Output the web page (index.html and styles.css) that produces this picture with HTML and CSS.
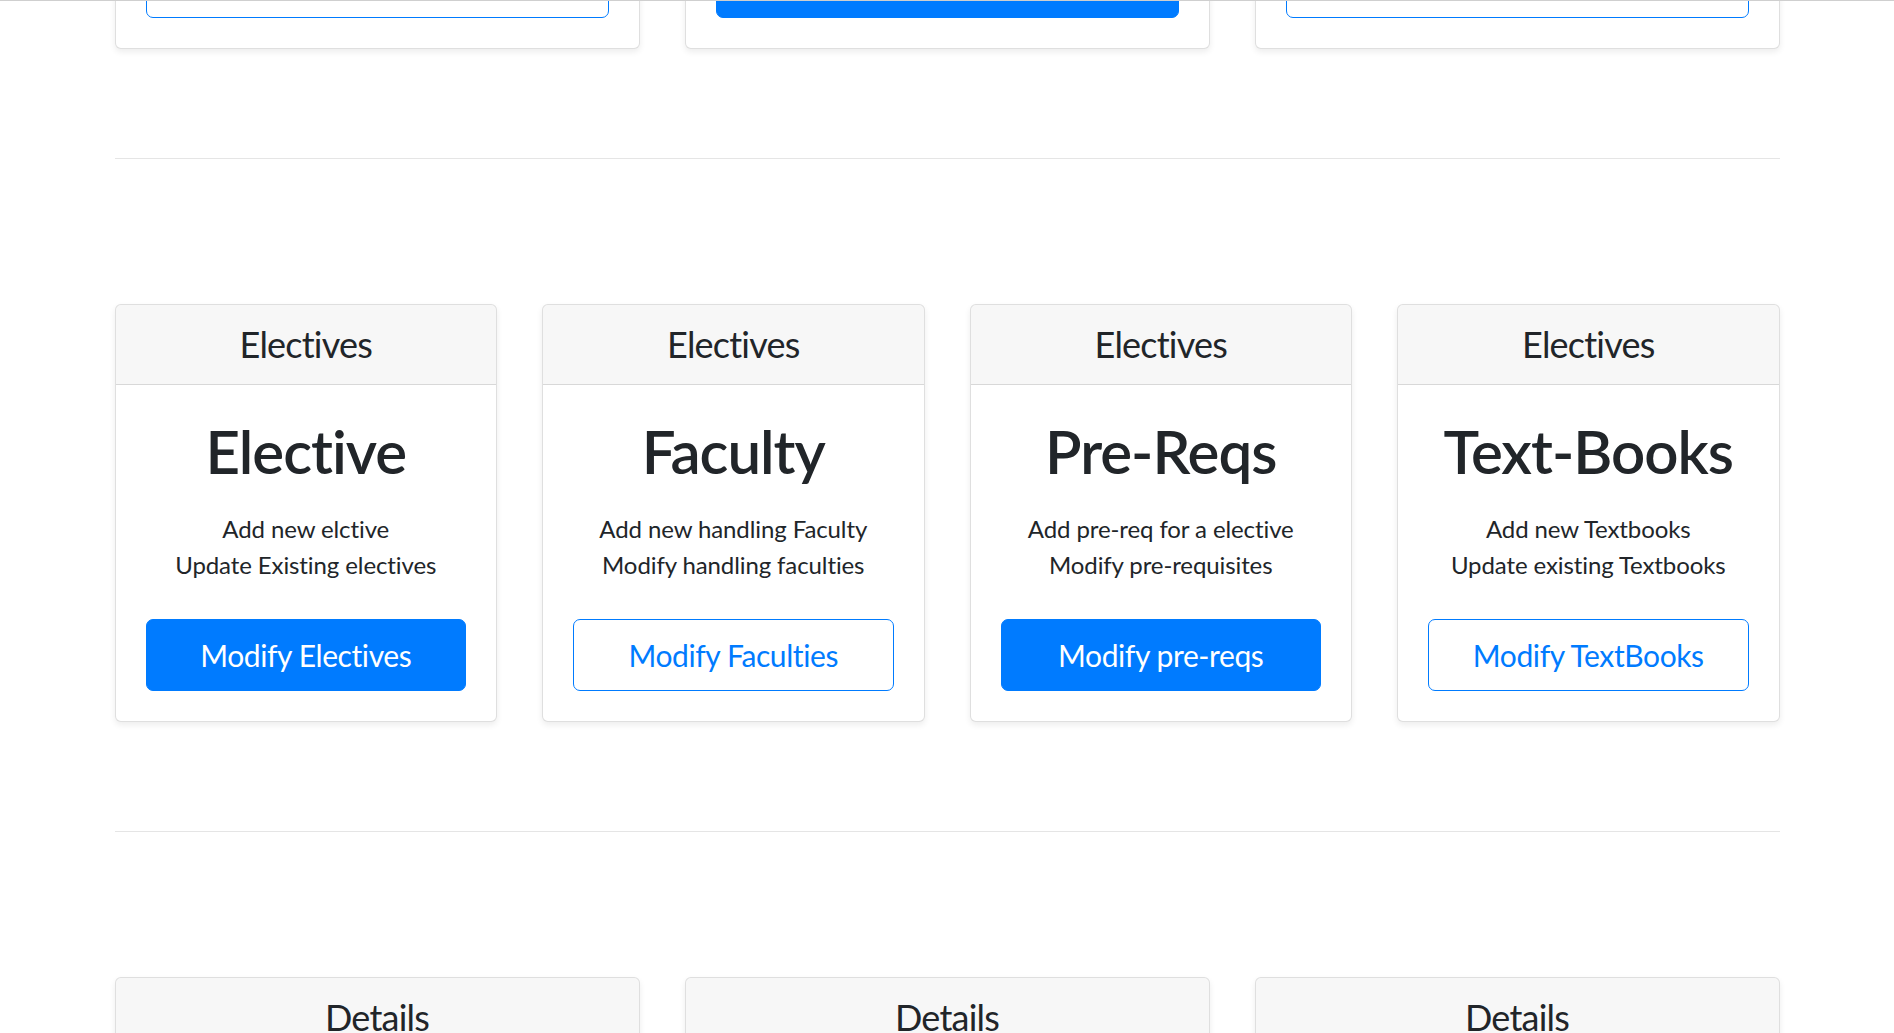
FILE: index.html
```html
<!DOCTYPE html>
<html lang="en">
<head>
<meta charset="utf-8">
<title>Electives Admin</title>
<link rel="stylesheet" href="styles.css">
</head>
<body>
<div class="topline"></div>
<main class="container">
  <section class="deck deck-3 deck-first">
    <div class="card">
      <div class="card-header"><h4 class="card-head-title">Students</h4></div>
      <div class="card-body">
        <h1 class="card-title">Students</h1>
        <ul class="card-list"><li>Add new students</li><li>Update existing students</li></ul>
        <button type="button" class="btn btn-outline">Modify Students</button>
      </div>
    </div>
    <div class="card">
      <div class="card-header"><h4 class="card-head-title">Students</h4></div>
      <div class="card-body">
        <h1 class="card-title">Allotment</h1>
        <ul class="card-list"><li>Allot electives</li><li>View allotments</li></ul>
        <button type="button" class="btn btn-primary">Modify Allotment</button>
      </div>
    </div>
    <div class="card">
      <div class="card-header"><h4 class="card-head-title">Students</h4></div>
      <div class="card-body">
        <h1 class="card-title">Preferences</h1>
        <ul class="card-list"><li>View preferences</li><li>Update preferences</li></ul>
        <button type="button" class="btn btn-outline">Modify Preferences</button>
      </div>
    </div>
  </section>

  <hr class="divider">

  <section class="deck deck-4">
    <div class="card">
      <div class="card-header"><h4 class="card-head-title">Electives</h4></div>
      <div class="card-body">
        <h1 class="card-title">Elective</h1>
        <ul class="card-list"><li>Add new elctive</li><li>Update Existing electives</li></ul>
        <button type="button" class="btn btn-primary">Modify Electives</button>
      </div>
    </div>
    <div class="card">
      <div class="card-header"><h4 class="card-head-title">Electives</h4></div>
      <div class="card-body">
        <h1 class="card-title">Faculty</h1>
        <ul class="card-list"><li>Add new handling Faculty</li><li>Modify handling faculties</li></ul>
        <button type="button" class="btn btn-outline">Modify Faculties</button>
      </div>
    </div>
    <div class="card">
      <div class="card-header"><h4 class="card-head-title">Electives</h4></div>
      <div class="card-body">
        <h1 class="card-title">Pre-Reqs</h1>
        <ul class="card-list"><li>Add pre-req for a elective</li><li>Modify pre-requisites</li></ul>
        <button type="button" class="btn btn-primary">Modify pre-reqs</button>
      </div>
    </div>
    <div class="card">
      <div class="card-header"><h4 class="card-head-title">Electives</h4></div>
      <div class="card-body">
        <h1 class="card-title">Text-Books</h1>
        <ul class="card-list"><li>Add new Textbooks</li><li>Update existing Textbooks</li></ul>
        <button type="button" class="btn btn-outline">Modify TextBooks</button>
      </div>
    </div>
  </section>

  <hr class="divider">

  <section class="deck deck-3">
    <div class="card">
      <div class="card-header"><h4 class="card-head-title">Details</h4></div>
      <div class="card-body">
        <h1 class="card-title">Students</h1>
        <ul class="card-list"><li>View student details</li><li>Export student list</li></ul>
        <button type="button" class="btn btn-outline">View Students</button>
      </div>
    </div>
    <div class="card">
      <div class="card-header"><h4 class="card-head-title">Details</h4></div>
      <div class="card-body">
        <h1 class="card-title">Electives</h1>
        <ul class="card-list"><li>View elective details</li><li>Export elective list</li></ul>
        <button type="button" class="btn btn-primary">View Electives</button>
      </div>
    </div>
    <div class="card">
      <div class="card-header"><h4 class="card-head-title">Details</h4></div>
      <div class="card-body">
        <h1 class="card-title">Faculty</h1>
        <ul class="card-list"><li>View faculty details</li><li>Export faculty list</li></ul>
        <button type="button" class="btn btn-outline">View Faculty</button>
      </div>
    </div>
  </section>
</main>
</body>
</html>
```

FILE: styles.css
```css
* { box-sizing: border-box; }

html, body {
  margin: 0;
  padding: 0;
  background: #fff;
}

body {
  font-family: Lato, Roboto, "Open Sans", Arial, sans-serif;
  color: #212529;
  font-size: 24px;
  line-height: 1.5;
}

.topline {
  position: fixed;
  top: 0;
  left: 0;
  right: 0;
  height: 1px;
  background: #cfcfcf;
  z-index: 10;
}

.container {
  width: 1665px;
  margin: 0 auto;
}

.deck {
  display: flex;
  gap: 45px;
  text-align: center;
}

.deck-first {
  margin-top: -369px;
}

.card {
  flex: 1 1 0;
  min-width: 0;
  background: #fff;
  border: 1px solid rgba(0, 0, 0, 0.125);
  border-radius: 6px;
  box-shadow: 0 3px 6px rgba(0, 0, 0, 0.075);
  overflow: hidden;
}

.card-header {
  padding: 18px 30px;
  background: rgba(0, 0, 0, 0.03);
  border-bottom: 1px solid rgba(0, 0, 0, 0.125);
}

.card-head-title {
  margin: 0;
  font-size: 36px;
  font-weight: 400;
  line-height: 43.2px;
  letter-spacing: -0.8px;
}

.card-body {
  padding: 30px;
}

.card-title {
  margin: 0 0 24px;
  font-size: 60px;
  font-weight: 600;
  line-height: 72px;
  letter-spacing: -1px;
  white-space: nowrap;
}

.card-list {
  list-style: none;
  margin: 0 0 36px;
  padding: 0;
  line-height: 36px;
  letter-spacing: -0.1px;
}

.btn {
  display: block;
  width: 100%;
  padding: 13px 24px;
  font-family: inherit;
  font-size: 30px;
  line-height: 44px;
  letter-spacing: -0.4px;
  border: 1px solid #007bff;
  border-radius: 7px;
  cursor: pointer;
}

.btn-primary {
  background: #007bff;
  color: #fff;
}

.btn-outline {
  background: transparent;
  color: #007bff;
}

.divider {
  margin: 108.7px 0 145px;
  border: 0;
  border-top: 1px solid rgba(0, 0, 0, 0.1);
  height: 0;
}
```
